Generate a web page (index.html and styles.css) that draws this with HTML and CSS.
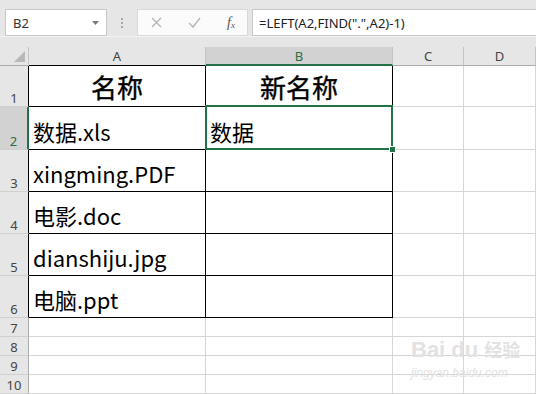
FILE: index.html
```html
<!DOCTYPE html>
<html lang="zh-CN">
<head>
    <meta charset="UTF-8">
    <meta name="viewport" content="width=device-width, initial-scale=1.0">
    <title>Excel LEFT FIND</title>
    <link rel="stylesheet" href="styles.css">
</head>
<body>
    <div class="toolbar">
        <div class="namebox">
            <span>B2</span>
            <svg class="namebox__arrow" width="7" height="4" viewBox="0 0 7 4"><path d="M0 0h7L3.5 4z" fill="#7a7a7a"/></svg>
        </div>
        <div class="grip"><i></i><i></i><i></i></div>
        <div class="fxbtns">
            <svg width="11" height="11" viewBox="0 0 11 11"><path d="M1 1l9 9M10 1l-9 9" stroke="#b4b4b4" stroke-width="1.3"/></svg>
            <svg width="13" height="11" viewBox="0 0 13 11"><path d="M1 6l4 4 7-9" stroke="#b4b4b4" stroke-width="1.3" fill="none"/></svg>
            <span class="fxbtns__fx">f<sub>x</sub></span>
        </div>
        <div class="formula">=LEFT(A2,FIND(".",A2)-1)</div>
    </div>

    <div class="sheet">
        <div class="c hd corner"><svg width="11" height="11" viewBox="0 0 11 11"><path d="M11 0v11H0z" fill="#b8b8b8"/></svg></div>
        <div class="c hd col col_tb">A</div>
        <div class="c hd col col_active">B</div>
        <div class="c hd col">C</div>
        <div class="c hd col">D</div>

        <div class="c rh rh_tb">1</div>
        <div class="c t title">名称</div>
        <div class="c t title">新名称</div>
        <div class="c"></div>
        <div class="c"></div>

        <div class="c rh rh_active">2</div>
        <div class="c t txt">数据.xls</div>
        <div class="c t txt sel">数据</div>
        <div class="c"></div>
        <div class="c"></div>

        <div class="c rh rh_tb">3</div>
        <div class="c t txt">xingming.PDF</div>
        <div class="c t"></div>
        <div class="c"></div>
        <div class="c"></div>

        <div class="c rh rh_tb">4</div>
        <div class="c t txt">电影.doc</div>
        <div class="c t"></div>
        <div class="c"></div>
        <div class="c"></div>

        <div class="c rh rh_tb">5</div>
        <div class="c t txt">dianshiju.jpg</div>
        <div class="c t"></div>
        <div class="c"></div>
        <div class="c"></div>

        <div class="c rh rh_tb">6</div>
        <div class="c t txt">电脑.ppt</div>
        <div class="c t"></div>
        <div class="c"></div>
        <div class="c"></div>

        <div class="c rh">7</div>
        <div class="c"></div>
        <div class="c"></div>
        <div class="c"></div>
        <div class="c"></div>

        <div class="c rh">8</div>
        <div class="c"></div>
        <div class="c"></div>
        <div class="c"></div>
        <div class="c"></div>

        <div class="c rh">9</div>
        <div class="c"></div>
        <div class="c"></div>
        <div class="c"></div>
        <div class="c"></div>

        <div class="c rh">10</div>
        <div class="c"></div>
        <div class="c"></div>
        <div class="c"></div>
        <div class="c"></div>

        <div class="watermark">
            <div class="watermark__logo">Bai<span class="watermark__du">du</span><span class="watermark__cn">经验</span></div>
            <div class="watermark__url">jingyan.baidu.com</div>
        </div>
    </div>
</body>
</html>
```

FILE: styles.css
```css
body {
    margin: 0;
    background: #e6e6e6;
    font-family: "Noto Sans", "Noto Sans CJK SC", sans-serif;
    overflow: hidden;
}
.toolbar {
    display: flex;
    align-items: center;
    height: 37px;
    border-bottom: 1px solid #f4f4f4;
    padding: 0 0 0 5px;
    box-sizing: border-box;
}
.namebox, .fxbtns, .formula {
    height: 27px;
    margin-top: 9px;
    box-sizing: border-box;
    background: #fff;
    border: 1px solid #c8c8c8;
    display: flex;
    align-items: center;
}
.namebox {
    width: 102px;
    padding: 0 7px;
    justify-content: space-between;
    font-size: 13px;
    color: #333;
}
.grip {
    width: 30px;
    display: flex;
    flex-direction: column;
    align-items: center;
    gap: 2px;
    margin-top: 9px;
}
.grip i {
    width: 2px;
    height: 2px;
    background: #a8a8a8;
}
.fxbtns {
    width: 111px;
    padding: 0 12px 0 13px;
    justify-content: space-between;
    background: #fbfbfb;
    border-color: #d8d8d8;
}
.fxbtns__fx {
    font-family: "Liberation Serif", serif;
    font-style: italic;
    font-size: 14px;
    color: #555;
}
.fxbtns__fx sub {
    font-size: 9px;
    vertical-align: -1px;
}
.formula {
    flex: 1;
    margin-left: 4px;
    padding-left: 6px;
    font-size: 13px;
    color: #222;
    border-right: none;
}

.sheet {
    margin-top: 10px;
    position: relative;
    display: grid;
    grid-template-columns: 29px 177px 187px 71px 1fr;
    grid-template-rows: 19px 41px 43px 42px 42px 42px 42px 19px 19px 19px 19px;
    background: #fff;
}
.c {
    box-sizing: border-box;
    border-right: 1px solid #d6d6d6;
    border-bottom: 1px solid #d6d6d6;
}
.hd {
    background: #e6e6e6;
    border-right-color: #c4c4c4;
    border-bottom-color: #ababab;
    font-size: 13px;
    color: #444;
    text-align: center;
    line-height: 18px;
}
.corner {
    display: flex;
    align-items: flex-end;
    justify-content: flex-end;
    padding: 0 3px 3px 0;
}
.corner svg {
    display: block;
}
.col_tb {
    border-bottom-color: #000;
}
.col_active {
    background: #d2d2d2;
    color: #2e6b4a;
    border-bottom: 2px solid #217346;
}
.rh {
    background: #e6e6e6;
    border-right-color: #ababab;
    border-bottom-color: #d0d0d0;
    font-size: 13px;
    color: #444;
    display: flex;
    align-items: flex-end;
    justify-content: center;
    line-height: 16px;
}
.rh_tb {
    border-right-color: #000;
}
.rh_active {
    background: #d2d2d2;
    color: #2e6b4a;
    border-right: 2px solid #217346;
}
.t {
    border-right-color: #000;
    border-bottom-color: #000;
    font-family: "Noto Sans CJK SC", sans-serif;
    color: #000;
    display: flex;
    align-items: flex-end;
}
.title {
    justify-content: center;
    font-size: 26px;
    font-weight: 400;
    line-height: 32px;
    padding-bottom: 3px;
    -webkit-text-stroke: 0.4px #000;
}
.txt {
    font-size: 22px;
    line-height: 28px;
    padding: 0 0 4px 4px;
}
.sel {
    position: relative;
}
.sel::before {
    content: "";
    position: absolute;
    top: -2px;
    left: -1px;
    right: -1px;
    bottom: -1px;
    border: 2px solid #217346;
}
.sel::after {
    content: "";
    position: absolute;
    right: -4px;
    bottom: -4px;
    width: 5px;
    height: 5px;
    background: #217346;
    border: 1px solid #fff;
}
.watermark {
    position: absolute;
    left: 411px;
    top: 289px;
    color: #e2e2e2;
    font-family: "Liberation Sans", sans-serif;
    white-space: nowrap;
    pointer-events: none;
}
.watermark__logo {
    font-size: 22px;
    font-weight: 700;
    line-height: 26px;
}
.watermark__du {
    margin-left: 6px;
}
.watermark__cn {
    margin-left: 6px;
    font-family: "Noto Sans CJK SC", sans-serif;
    font-size: 18px;
}
.watermark__url {
    font-size: 12px;
    font-style: italic;
    margin-top: 3px;
}
```
